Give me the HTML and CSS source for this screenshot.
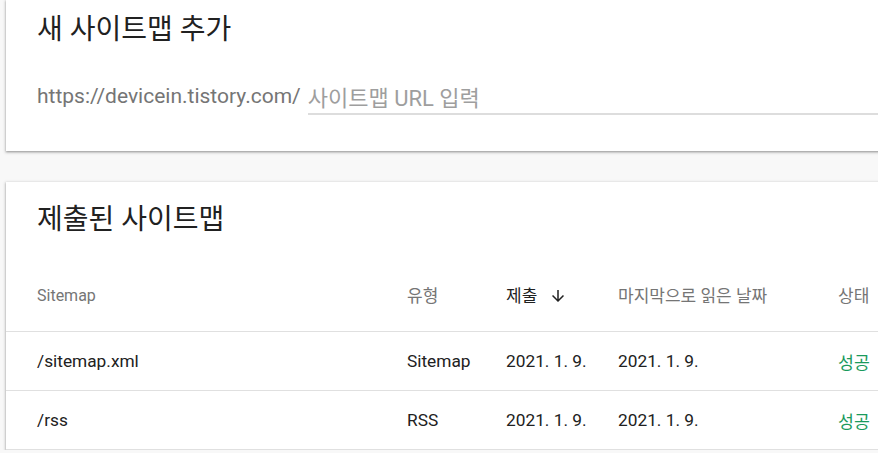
FILE: index.html
```html
<!DOCTYPE html>
<html lang="ko">
<head>
<meta charset="utf-8">
<title>Sitemaps</title>
<link rel="stylesheet" href="styles.css">
</head>
<body>
<div class="page">
  <section class="card add-card">
    <h2 class="card-title">새 사이트맵 추가</h2>
    <div class="url-row">
      <span class="url-prefix">https://devicein.tistory.com/</span>
      <input class="url-input" type="text" placeholder="사이트맵 URL 입력">
    </div>
  </section>

  <section class="card list-card">
    <h2 class="card-title">제출된 사이트맵</h2>
    <div class="table">
      <div class="row head">
        <div class="cell latin">Sitemap</div>
        <div class="cell">유형</div>
        <div class="cell sorted">제출
          <svg class="arrow" viewBox="0 0 24 24" width="18" height="18"><path d="M20 12l-1.41-1.41L13 16.17V4h-2v12.17l-5.58-5.59L4 12l8 8 8-8z" fill="#212121"/></svg>
        </div>
        <div class="cell">마지막으로 읽은 날짜</div>
        <div class="cell">상태</div>
      </div>
      <div class="row">
        <div class="cell">/sitemap.xml</div>
        <div class="cell">Sitemap</div>
        <div class="cell">2021. 1. 9.</div>
        <div class="cell">2021. 1. 9.</div>
        <div class="cell ok">성공</div>
      </div>
      <div class="row">
        <div class="cell">/rss</div>
        <div class="cell">RSS</div>
        <div class="cell">2021. 1. 9.</div>
        <div class="cell">2021. 1. 9.</div>
        <div class="cell ok">성공</div>
      </div>
    </div>
  </section>
</div>
</body>
</html>
```

FILE: styles.css
```css
html, body {
  margin: 0;
  padding: 0;
  background: #f8f8f8;
  overflow: hidden;
}
body {
  font-family: Roboto, "Noto Sans CJK KR", sans-serif;
  color: #212121;
}
.page {
  display: flex;
  flex-direction: column;
  gap: 31px;
  padding-left: 6px;
  width: 1000px;
}
.card {
  background: #fff;
  box-shadow: 0 1px 2px rgba(0,0,0,0.3), 0 1px 3px 1px rgba(0,0,0,0.12);
}
.card-title {
  margin: 0;
  padding-left: 31px;
  font-size: 28px;
  font-weight: 400;
  line-height: 32px;
  color: #212121;
}
.add-card {
  padding-top: 14px;
  height: 151px;
  box-sizing: border-box;
}
.url-row {
  display: flex;
  align-items: flex-end;
  padding-left: 31px;
  margin-top: 36px;
}
.url-prefix {
  font-size: 21px;
  line-height: 24px;
  color: #757575;
  padding-bottom: 7px;
}
.url-input {
  flex: 1;
  margin-left: 7px;
  border: none;
  border-bottom: 2px solid #dddddd;
  padding: 2px 0 0 0;
  font-family: Roboto, "Noto Sans CJK KR", sans-serif;
  font-size: 22px;
  line-height: 26px;
  height: 29px;
  outline: none;
  background: transparent;
}
.url-input::placeholder {
  color: #9e9e9e;
}
.list-card {
  padding-top: 22px;
}
.table {
  margin-top: 50px;
}
.row {
  display: grid;
  grid-template-columns: 370px 99px 112px 220px 1fr;
  padding-left: 31px;
  border-bottom: 1px solid #e0e0e0;
  height: 58px;
  align-items: center;
  font-size: 17.3px;
  color: #212121;
}
.row.head {
  height: auto;
  align-items: end;
  padding-bottom: 25px;
  font-size: 17px;
  line-height: 20px;
  color: #757575;
}
.row.head .latin {
  font-size: 16px;
}
.cell {
  white-space: nowrap;
}
.sorted {
  color: #212121;
  display: flex;
  align-items: center;
}
.arrow {
  margin-left: 12px;
}
.ok {
  color: #1a9a5c;
}
```
